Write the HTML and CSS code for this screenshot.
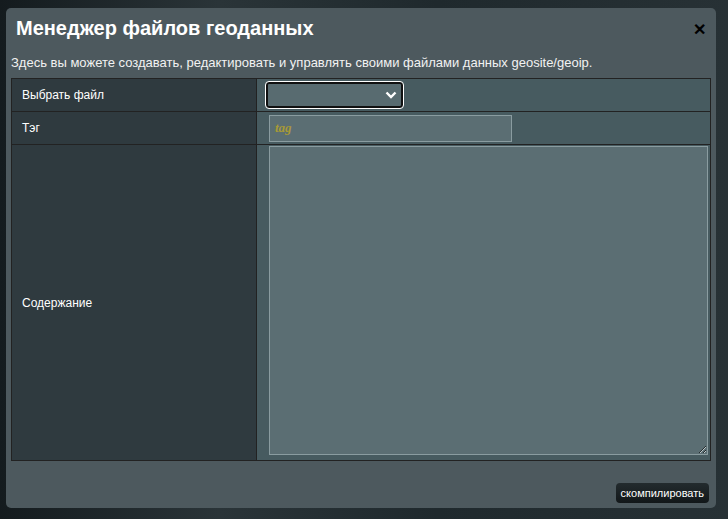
FILE: index.html
```html
<!DOCTYPE html>
<html>
<head>
  <title>Менеджер файлов геоданных</title>
  <link rel="stylesheet" href="styles.css">
</head>
<body>
  <div class="modal">
    <div class="modal-header">
      <h2>Менеджер файлов геоданных</h2>
      <span class="close">&#x2715;</span>
    </div>
    <p class="desc">Здесь вы можете создавать, редактировать и управлять своими файлами данных geosite/geoip.</p>
    <table class="form-table">
      <tr class="row-short">
        <th>Выбрать файл</th>
        <td>
          <div class="select">
            <svg width="12" height="8" viewBox="0 0 12 8"><path d="M1.5 1.5 L6 6 L10.5 1.5" fill="none" stroke="#fff" stroke-width="2.4"/></svg>
          </div>
        </td>
      </tr>
      <tr class="row-short">
        <th>Тэг</th>
        <td><input class="input" placeholder="tag"></td>
      </tr>
      <tr>
        <th>Содержание</th>
        <td class="area-cell"><textarea class="area"></textarea></td>
      </tr>
    </table>
    <div class="footer">
      <button class="btn">скомпилировать</button>
    </div>
  </div>
</body>
</html>
```

FILE: styles.css
```css
body {
  margin: 0;
  height: 519px;
  overflow: hidden;
  background: linear-gradient(90deg, #141b1e 0%, #2a3438 30%, #1f292d 60%, #273135 100%);
  font-family: "Liberation Sans", Arial, sans-serif;
  color: #fff;
}

.modal {
  margin: 8px 0 0 6px;
  width: 710px;
  height: 500px;
  box-sizing: border-box;
  background: #4d595e;
  border-radius: 5px;
  padding: 0 5px;
  display: flex;
  flex-direction: column;
}

.modal-header {
  display: flex;
  justify-content: space-between;
  align-items: center;
  height: 40px;
  padding: 0 5px 0 5px;
}

.modal-header h2 {
  margin: 0;
  font-size: 20px;
  font-weight: bold;
}

.close {
  color: #000;
  font-size: 16px;
  font-weight: bold;
  margin-top: 2px;
}

.desc {
  margin: 7px 0 0 0;
  font-size: 13px;
  color: #f2f2f2;
  height: 23px;
}

.form-table {
  border-collapse: collapse;
  width: 700px;
}

.form-table th {
  width: 234px;
  background: #2f3a3f;
  border: 1px solid #222;
  text-align: left;
  font-weight: normal;
  font-size: 12px;
  padding: 0 0 0 10px;
  color: #fff;
}

.form-table td {
  background: #475b60;
  border: 1px solid #222;
  padding: 0 0 0 9px;
}

.row-short th,
.row-short td {
  height: 32px;
}

.select {
  width: 129px;
  height: 22px;
  background: #586b70;
  border: 2px solid #111;
  border-radius: 3px;
  outline: 1px solid #fff;
  display: flex;
  align-items: center;
  justify-content: flex-end;
  padding-right: 4px;
}

.input {
  display: block;
  width: 243px;
  height: 27px;
  box-sizing: border-box;
  margin-left: 3px;
  background: #5b6e73;
  border: 1px solid #8a9ca0;
  padding: 0 5px;
  font-family: "Liberation Serif", serif;
  font-style: italic;
  font-weight: bold;
  font-size: 13px;
}

.input::placeholder {
  color: #a89a36;
}

.area-cell {
  height: 314px;
  vertical-align: top;
  padding-top: 1px !important;
}

.area {
  display: block;
  width: 439px;
  height: 309px;
  box-sizing: border-box;
  margin-left: 3px;
  background: #5b6e73;
  border: 1px solid #8a9ca0;
  resize: both;
}

.footer {
  display: flex;
  justify-content: flex-end;
  padding: 22px 2px 0 0;
}

.btn {
  background: linear-gradient(#232b2e, #121719);
  color: #fff;
  border: none;
  border-radius: 4px;
  font-family: "Liberation Sans", Arial, sans-serif;
  font-size: 11px;
  height: 20px;
  padding: 0 5px;
}
```
